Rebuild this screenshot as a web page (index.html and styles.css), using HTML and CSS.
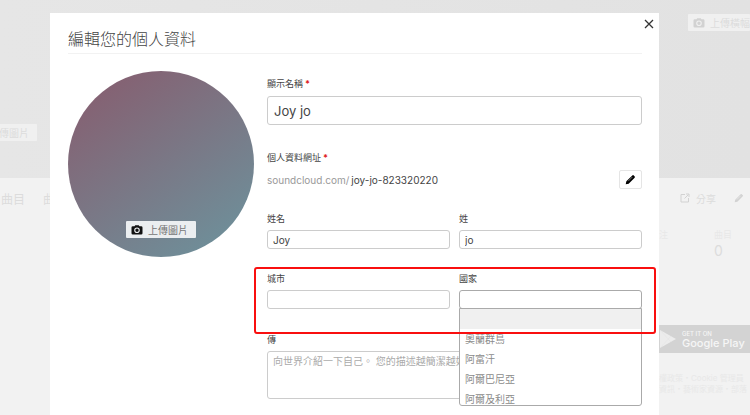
FILE: index.html
```html
<!DOCTYPE html>
<html lang="zh-Hant">
<head>
  <meta charset="UTF-8" />
  <meta name="viewport" content="width=device-width, initial-scale=1.0"/>
  <title>編輯您的個人資料</title>
  <link rel="stylesheet" href="styles.css">
</head>
<body>
  <svg class="sprite" aria-hidden="true">
    <symbol id="camera" viewBox="0 0 12 10">
      <path fill-rule="evenodd" d="M3.6 1.2 4.2.3h3.6l.6.9h1.8q1.3 0 1.3 1.3v5.7q0 1.3-1.3 1.3H1.8Q.5 9.500.5 8.200V2.500q0-1.300 1.300-1.300zM6 2.500a2.800 2.800 0 1 0 0 5.600 2.800 2.800 0 0 0 0-5.600zm0 1.100a1.700 1.700 0 1 1 0 3.400 1.700 1.700 0 0 1 0-3.400z"/>
    </symbol>
    <symbol id="pencil" viewBox="0 0 12 12">
      <path d="M.8 11.200 1.500 8 8 1.500q.6-.6 1.300-.1l1.300 1.300q.5.700-.1 1.300L4 10.500z"/>
      <path d="M3.500 7.800 8 3.300" stroke="#fff" stroke-width=".5"/>
    </symbol>
  </svg>

  <!-- Profile page behind the dialog -->
  <div class="page" aria-hidden="true">
    <div class="banner">
      <div class="banner-left"><span class="upload">上傳圖片</span></div>
      <div class="banner-right">
        <span class="upload"><svg class="icon"><use href="#camera"/></svg>上傳橫幅圖片</span>
      </div>
    </div>
    <div class="content">
      <div class="tabs"><span>曲目</span><span>曲目</span></div>
      <div class="side">
        <div class="actions">
          <svg class="icon share" viewBox="0 0 10 10"><path d="M5 1.500H1v7.500h7.500V5M4.500 5.500 8.500 1.500M6 1h3v3" fill="none" stroke="currentColor"/></svg>
          <span>分享</span>
          <svg class="icon edit"><use href="#pencil"/></svg>
        </div>
        <div class="stats">
          <div>關注</div>
          <div>曲目<strong>0</strong></div>
        </div>
        <div class="play">
          <svg viewBox="0 0 18 20"><path d="M1 1v18l16-9z" fill="#ececec"/><path d="M1 1l11 12M1 19 12 7" stroke="#e2e2e2" stroke-width=".5"/></svg>
          <div><small>GET IT ON</small>Google Play</div>
        </div>
        <p class="legal">權政策・Cookie 管理員<br>資訊・藝術家資源・部落</p>
      </div>
    </div>
  </div>

  <div class="overlay">
    <div class="modal" role="dialog" aria-labelledby="title">
      <button class="close" aria-label="關閉">
        <svg viewBox="0 0 10 10"><path d="M1 1l8 8M9 1 1 9" stroke="#333" stroke-width="1.300"/></svg>
      </button>
      <h1 id="title">編輯您的個人資料</h1>

      <form class="editor">
        <div class="avatar">
          <button type="button" class="upload"><svg class="icon"><use href="#camera"/></svg>上傳圖片</button>
        </div>

        <div class="fields">
          <div class="field large">
            <label for="name">顯示名稱<b>*</b></label>
            <input type="text" id="name" value="Joy jo">
          </div>

          <div class="field">
            <span class="label">個人資料網址<b>*</b></span>
            <div class="url">
              <span class="domain">soundcloud.com/</span>
              <span>joy-jo-823320220</span>
              <button type="button" class="pencil" aria-label="編輯網址"><svg><use href="#pencil"/></svg></button>
            </div>
          </div>

          <div class="row">
            <div class="field">
              <label for="first">姓名</label>
              <input type="text" id="first" value="Joy">
            </div>
            <div class="field">
              <label for="last">姓</label>
              <input type="text" id="last" value="jo">
            </div>
          </div>

          <div class="row marked">
            <div class="field">
              <label for="city">城市</label>
              <input type="text" id="city">
            </div>
            <div class="field country">
              <label for="country">國家</label>
              <select id="country"><option></option></select>
              <ul class="menu">
                <li class="active"></li>
                <li>奧蘭群島</li>
                <li>阿富汗</li>
                <li>阿爾巴尼亞</li>
                <li>阿爾及利亞</li>
              </ul>
            </div>
          </div>

          <div class="field">
            <label for="bio">傳</label>
            <textarea id="bio" placeholder="向世界介紹一下自己。 您的描述越簡潔越好。"></textarea>
          </div>
        </div>
      </form>
    </div>
  </div>
</body>
</html>
```

FILE: styles.css
```css
* {
  box-sizing: border-box;
}

body {
  margin: 0;
  height: 100vh;
  overflow: hidden;
  position: relative;
  background: #f2f2f2;
  font-family: Inter, "Noto Sans CJK TC", sans-serif;
  font-size: 10px;
  color: #444;
}

.sprite {
  position: absolute;
  width: 0;
  height: 0;
}

.icon {
  width: 12px;
  height: 10px;
  flex: none;
}

.upload {
  display: flex;
  align-items: center;
  gap: 5px;
  height: 17px;
  padding: 0 8px 0 5px;
  border: 0;
  border-radius: 1px;
  white-space: nowrap;
  font: inherit;
}

/* page behind */
.page {
  color: #dcdcdc;
}

.banner {
  display: flex;
  justify-content: space-between;
  height: 178px;
  background: linear-gradient(90deg, #e6e6e6, #e2e2e2);
}

.banner .upload {
  background: #f0f0f0;
}

.banner .icon {
  fill: #d2d2d2;
}

.banner-left {
  display: flex;
  justify-content: flex-end;
  align-items: flex-end;
  width: 37px;
  padding-bottom: 37px;
  overflow: hidden;
}

.banner-right {
  width: 62px;
  padding-top: 14px;
}

.content {
  display: flex;
  justify-content: space-between;
}

.tabs {
  display: flex;
  gap: 18px;
  padding: 12px 0 0 1px;
  font-size: 12px;
}

.side {
  width: 91px;
  overflow: hidden;
}

.actions {
  display: flex;
  align-items: center;
  height: 20px;
  margin-top: 10px;
  padding-left: 20px;
  gap: 5px;
}

.actions span {
  width: 32px;
}

.actions .edit {
  fill: #d2d2d2;
}

.actions .share {
  color: #d2d2d2;
}

.stats {
  display: flex;
  justify-content: space-between;
  margin-top: 20px;
  padding-right: 18px;
  font-size: 9px;
  line-height: 14px;
  color: #e8e8e8;
}

.stats div:first-child {
  margin-left: -9px;
}

.stats strong {
  display: block;
  font-size: 14px;
  font-weight: 400;
  line-height: 18px;
  color: #dcdcdc;
}

.play {
  display: flex;
  align-items: center;
  gap: 5px;
  height: 28px;
  margin-top: 65px;
  background: #d3d3d3;
  color: #f6f6f6;
  font-size: 11px;
  font-weight: 500;
  line-height: 12px;
  white-space: nowrap;
}

.play svg {
  width: 18px;
  height: 20px;
  flex: none;
}

.play small {
  display: block;
  font-size: 6px;
  line-height: 7px;
}

.legal {
  margin: 20px 0 0;
  font-size: 8px;
  line-height: 11px;
  color: #e8e8e8;
  white-space: nowrap;
}

/* dialog */
.overlay {
  position: absolute;
  inset: 0;
  padding: 13px 91px 0 50px;
}

.modal {
  position: relative;
  height: 100%;
  padding: 12px 17px 0 18px;
  background: #fff;
}

.close {
  position: absolute;
  top: 5px;
  right: 4px;
  width: 12px;
  height: 12px;
  padding: 1px;
  border: 0;
  background: none;
}

.close svg {
  display: block;
}

h1 {
  margin: 0;
  height: 29px;
  border-bottom: 1px solid #f2f2f2;
  font-size: 16px;
  font-weight: 300;
  line-height: 28px;
}

.editor {
  display: grid;
  grid-template-columns: 186px 1fr;
  gap: 13px;
  align-items: start;
  padding-top: 17px;
}

.avatar {
  display: flex;
  justify-content: center;
  align-items: flex-end;
  aspect-ratio: 1;
  padding-bottom: 19px;
  border-radius: 50%;
  background: linear-gradient(145deg, #846374 15%, #708c97 85%);
}

.avatar .upload {
  background: #ebeef0;
  color: #777;
}

.avatar .icon {
  fill: #111;
}

.fields {
  padding-top: 6px;
}

.field,
.row {
  margin-bottom: 23px;
}

.field.large {
  margin-bottom: 26px;
}

label,
.label {
  display: block;
  margin-bottom: 4px;
  font-size: 9px;
  line-height: 14px;
}

.large label,
.label {
  margin-bottom: 5px;
}

label b,
.label b {
  margin-left: 2px;
  color: #e02020;
}

input,
select,
textarea {
  display: block;
  width: 100%;
  height: 19px;
  padding: 0 5px;
  border: 1px solid #ccc;
  border-radius: 3px;
  background: #fff;
  font: inherit;
  color: #444;
}

.large input {
  height: 29px;
  padding: 0 6px;
  font-size: 13px;
}

.url {
  display: flex;
  align-items: center;
  gap: 2px;
  height: 19px;
}

.domain {
  color: #999;
}

.pencil {
  width: 23px;
  height: 19px;
  margin-left: auto;
  padding: 0 5px;
  border: 1px solid #e5e5e5;
  border-radius: 2px;
  background: #fff;
}

.pencil svg {
  display: block;
  width: 11px;
  height: 11px;
}

.row {
  display: grid;
  grid-template-columns: 1fr 1fr;
  gap: 9px;
}

.row .field {
  margin-bottom: 0;
}

.row.marked {
  margin-bottom: 24px;
}

.marked,
.country {
  position: relative;
}

/* red frame around city and country */
.marked::after {
  content: "";
  position: absolute;
  inset: -5px -14px -25px -13px;
  z-index: 2;
  border: 2px solid #f90f0f;
  border-radius: 3px;
  pointer-events: none;
}

select {
  appearance: none;
  border-color: #aaa;
}

.menu {
  position: absolute;
  top: 100%;
  left: 0;
  right: 0;
  z-index: 1;
  max-height: 98px;
  margin: -1px 0 0;
  padding: 0;
  overflow: hidden;
  list-style: none;
  border: 1px solid #aaa;
  border-radius: 0 0 3px 3px;
  background: #fff;
  color: #8c8c8c;
}

.menu li {
  height: 20px;
  padding: 0 5px;
  line-height: 20px;
}

.menu .active {
  background: #f0f0f0;
}

textarea {
  height: 48px;
  padding: 1px 5px;
  line-height: 16px;
  resize: none;
}

textarea::placeholder {
  color: #aaa;
}
```
